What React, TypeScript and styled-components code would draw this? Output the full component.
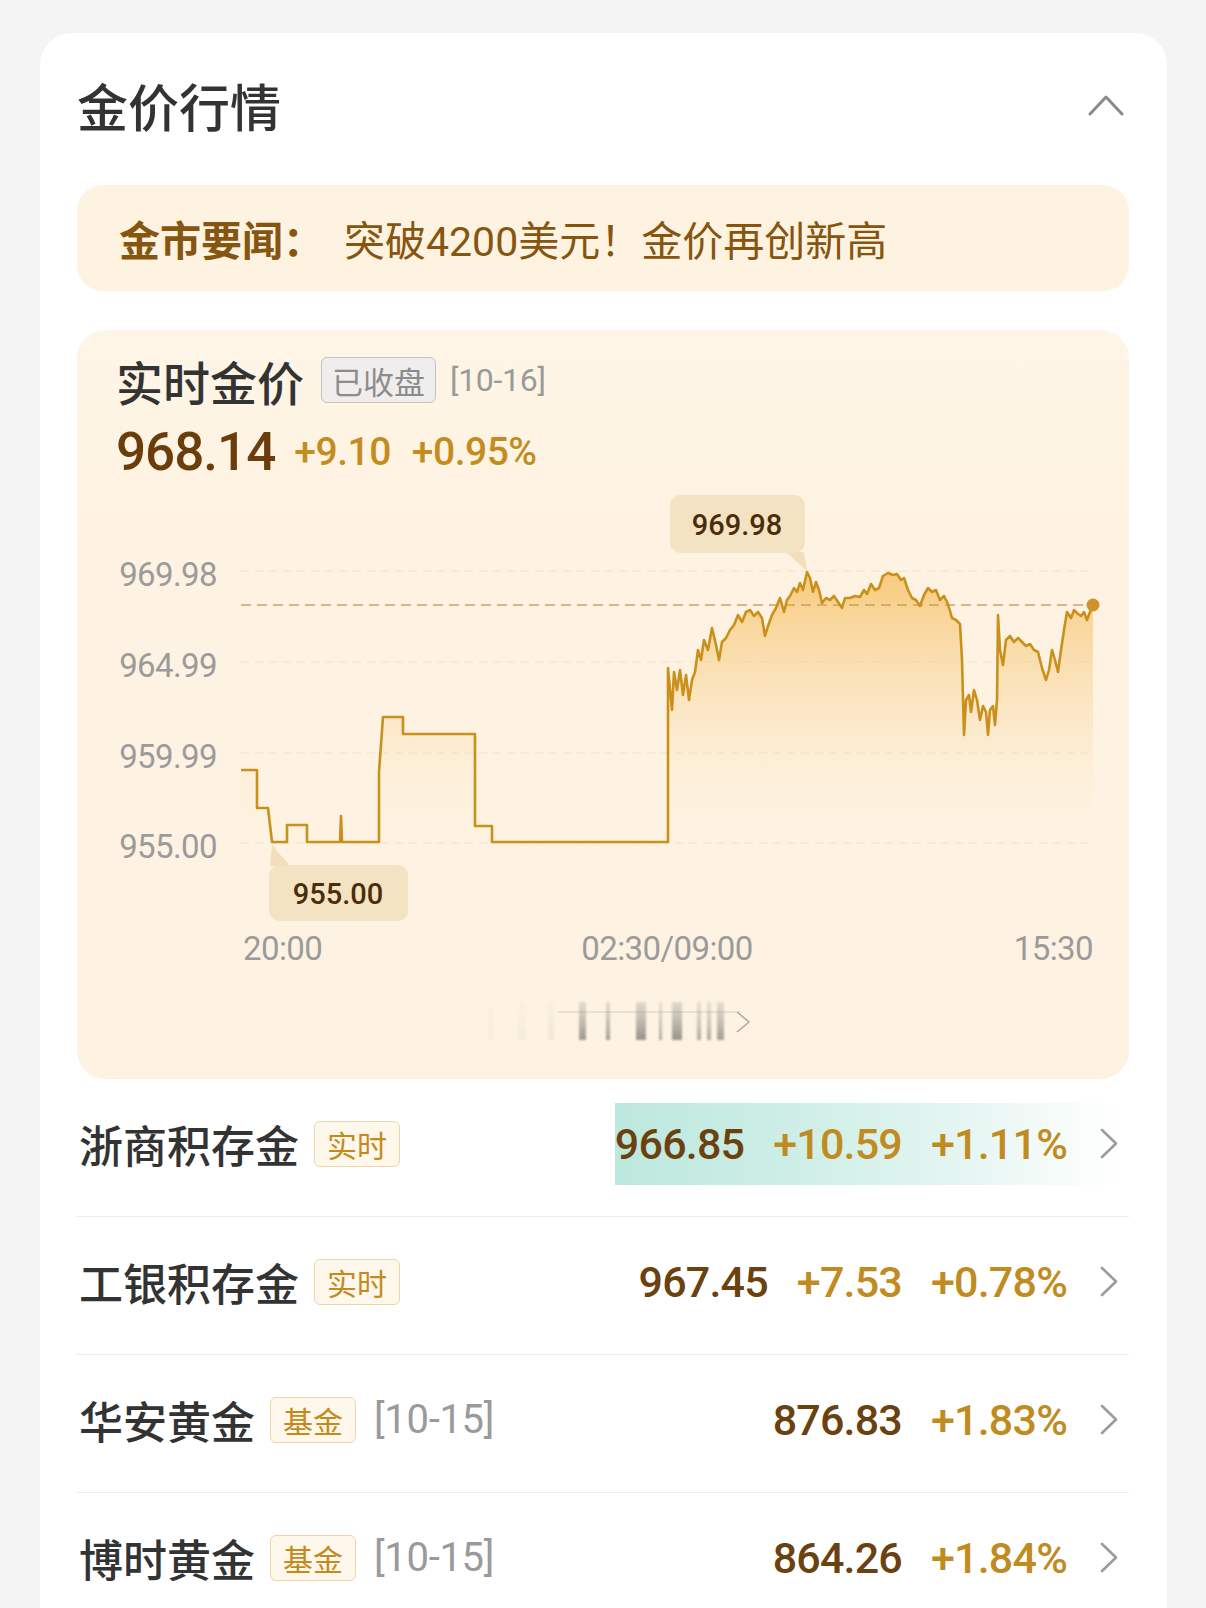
import React from "react";
import styled, { createGlobalStyle, css } from "styled-components";

const GlobalStyle = createGlobalStyle`
  html, body { margin: 0; padding: 0; }
  body {
    background: #f4f4f4;
    font-family: "Noto Sans CJK SC", "Noto Sans", sans-serif;
    -webkit-font-smoothing: antialiased;
  }
`;

const NUM_FONT = `"Roboto", "Noto Sans CJK SC", sans-serif`;

const Page = styled.div`
  min-height: 1608px;
  padding: 33px 39px 0 40px;
  box-sizing: border-box;
  overflow: hidden;
`;

const Card = styled.section`
  background: #ffffff;
  border-radius: 32px;
  padding: 0 38px 40px 37px;
`;

const Header = styled.header`
  height: 152px;
  box-sizing: border-box;
  padding-bottom: 8px;
  display: flex;
  align-items: center;
  justify-content: space-between;
`;

const Title = styled.h1`
  margin: 0;
  font-size: 51px;
  font-weight: 500;
  color: #333333;
  line-height: 1;
`;

const CollapseButton = styled.button`
  border: none;
  background: transparent;
  padding: 0;
  margin-right: 5px;
  display: flex;
  cursor: pointer;
`;

const NewsBanner = styled.div`
  height: 106px;
  border-radius: 26px;
  background: #fef3e0;
  display: flex;
  align-items: center;
  padding-left: 42px;
  font-family: ${NUM_FONT};
  font-size: 41px;
  color: #86550f;
`;

const NewsLabel = styled.span`
  font-family: "Noto Sans CJK SC", sans-serif;
  font-weight: 700;
`;

const NewsText = styled.span`
  margin-left: 20px;
`;

const ChartPanel = styled.div`
  margin-top: 39px;
  border-radius: 28px;
  background: linear-gradient(180deg, #fff5e6 0%, #fef3e2 30%, #fef3e2 100%);
  padding: 20px 0 29px;
`;

const PanelHead = styled.div`
  height: 60px;
  display: flex;
  align-items: center;
  padding-left: 39px;
`;

const PanelTitle = styled.span`
  font-size: 47px;
  font-weight: 500;
  color: #333333;
  line-height: 1;
`;

const StatusBadge = styled.span`
  margin-left: 17px;
  height: 46px;
  box-sizing: border-box;
  padding: 0 10px;
  display: inline-flex;
  align-items: center;
  border: 1px solid #c4c2bf;
  border-radius: 6px;
  background: #efeeec;
  color: #8c8c8c;
  font-size: 31px;
`;

const DateNote = styled.span<{ $size: number; $gap: number }>`
  margin-left: ${(p) => p.$gap}px;
  font-family: ${NUM_FONT};
  font-size: ${(p) => p.$size}px;
  color: #9a9a9a;
  letter-spacing: -0.3px;
`;

const PriceRow = styled.div`
  margin-top: 10px;
  height: 64px;
  display: flex;
  align-items: center;
  padding-left: 39px;
  font-family: ${NUM_FONT};
`;

const BigPrice = styled.span`
  font-size: 53px;
  font-weight: 500;
  color: #6a3d0b;
  letter-spacing: -1px;
`;

const Change = styled.span<{ $gap: number }>`
  margin-left: ${(p) => p.$gap}px;
  font-size: 39px;
  font-weight: 500;
  color: #c48c1d;
  letter-spacing: -0.5px;
`;

const ChartSvg = styled.svg`
  display: block;
  width: 1054px;
  height: 496px;
`;

const ScrollHint = styled.div`
  height: 70px;
  display: flex;
  justify-content: center;
  align-items: flex-start;
  padding-top: 20px;
  box-sizing: border-box;
  padding-right: 6px;
`;

const List = styled.div`
  display: flex;
  flex-direction: column;
`;

const Row = styled.div`
  height: 138px;
  box-sizing: border-box;
  padding-bottom: 8px;
  border-bottom: 1px solid #ececec;
  display: flex;
  align-items: center;
  justify-content: space-between;
`;

const RowLeft = styled.div`
  display: flex;
  align-items: center;
  padding-left: 2px;
`;

const Name = styled.span`
  font-size: 44px;
  font-weight: 500;
  color: #333333;
  line-height: 1;
`;

const Tag = styled.span`
  margin-left: 15px;
  height: 46px;
  box-sizing: border-box;
  padding: 0 12px;
  display: inline-flex;
  align-items: center;
  border: 1px solid #efd6a6;
  border-radius: 6px;
  background: #fdf7ec;
  color: #c48a1a;
  font-size: 30px;
`;

const RowRight = styled.div<{ $highlight?: boolean }>`
  height: 82px;
  margin-right: 11px;
  display: flex;
  align-items: center;
  ${(p) =>
    p.$highlight &&
    css`
      background: linear-gradient(
        90deg,
        #bde8de 0%,
        #cdeee6 35%,
        #e6f6f2 70%,
        #ffffff 100%
      );
    `}
`;

const Values = styled.div`
  display: flex;
  align-items: center;
  gap: 29px;
  font-family: ${NUM_FONT};
  font-size: 43px;
  font-weight: 500;
  letter-spacing: -0.8px;
`;

const Price = styled.span`
  color: #6a410f;
`;

const Delta = styled.span`
  color: #c08b20;
`;

const RowArrow = styled.span`
  margin-left: 33px;
  display: flex;
`;

const linePath =
  "M241,770 H257 V808 H268 L272,842 H287 V825 H307 V842 H340 L341,816 L342,842 H379 V772 L383,717 H403 V734 H475 V826 H492 V842 H668 V668 " +
  "L672,710 L674,672 L677,690 L680,670 L683,695 L686,675 L689,700 L692,680 L695,672 L698,650 L701,660 L704,640 L708,650 L712,628 L716,645 L719,660 L722,642 L726,638 L730,630 L734,625 L738,615 L742,622 L746,612 L750,610 L754,616 L758,612 L762,618 L765,636 L768,626 L772,615 L776,608 L780,598 L784,612 L787,600 L790,596 L794,588 L797,592 L800,583 L803,590 L807,572 L810,578 L813,592 L816,582 L819,590 L822,603 L826,598 L830,600 L834,596 L838,602 L842,608 L845,598 L850,598 L855,596 L860,597 L864,590 L867,594 L871,584 L875,590 L879,588 L883,576 L888,573 L893,575 L897,574 L901,580 L904,578 L908,590 L912,598 L916,600 L920,606 L924,595 L928,588 L932,592 L936,590 L940,600 L944,596 L948,604 L952,618 L956,620 L960,624 L962,660 L964,735 L966,700 L969,695 L971,712 L974,690 L977,700 L980,720 L983,706 L986,712 L988,735 L990,710 L993,706 L995,725 L997,700 L998,615 L1000,650 L1003,665 L1006,640 L1010,636 L1014,642 L1018,638 L1022,642 L1026,646 L1030,644 L1034,650 L1038,652 L1042,668 L1046,680 L1049,670 L1052,650 L1055,660 L1058,672 L1061,650 L1064,630 L1067,612 L1071,618 L1074,610 L1078,614 L1081,616 L1084,612 L1087,620 L1090,612 L1093,605";

const gridYs = [
  { y: 571, label: "969.98" },
  { y: 662, label: "964.99" },
  { y: 753, label: "959.99" },
  { y: 843, label: "955.00" },
];

const axisText = {
  fontFamily: "Roboto, sans-serif",
  fontSize: 33,
  fill: "#9b9b9b",
  letterSpacing: -0.6,
} as const;

const tipText = {
  fontFamily: "Roboto, sans-serif",
  fontSize: 29,
  fontWeight: 500,
  fill: "#4a2d0b",
} as const;

function PriceChart() {
  return (
    <ChartSvg viewBox="77 484 1054 496">
      <defs>
        <linearGradient id="area" x1="0" y1="571" x2="0" y2="860" gradientUnits="userSpaceOnUse">
          <stop offset="0" stopColor="#f6c062" stopOpacity="0.8" />
          <stop offset="0.45" stopColor="#f8d49a" stopOpacity="0.45" />
          <stop offset="1" stopColor="#fef3e2" stopOpacity="0" />
        </linearGradient>
      </defs>
      {gridYs.map((g) => (
        <g key={g.label}>
          <line x1={241} x2={1093} y1={g.y} y2={g.y} stroke="#f1e2c8" strokeWidth={1.2} strokeDasharray="8 6" />
          <text x={217} y={g.y + 3} textAnchor="end" dominantBaseline="central" style={axisText}>
            {g.label}
          </text>
        </g>
      ))}
      <path d={`${linePath} L1093,850 L241,850 Z`} fill="url(#area)" />
      <line x1={241} x2={1093} y1={605} y2={605} stroke="#cfa35c" strokeWidth={1.6} strokeDasharray="10 6" />
      <path d={linePath} fill="none" stroke="#c9901c" strokeWidth={2.6} strokeLinejoin="round" />
      <circle cx={1093} cy={605} r={6.5} fill="#d0922a" />

      <polygon points="786,552 804,552 807,571" fill="#f1dfba" />
      <rect x={670} y={495} width={135} height={58} rx={10} fill="#f4e3c2" />
      <text x={737} y={525} textAnchor="middle" dominantBaseline="central" style={tipText}>
        969.98
      </text>

      <polygon points="270,866 290,866 272,845" fill="#f1dfba" />
      <rect x={269} y={865} width={139} height={56} rx={10} fill="#f4e3c2" />
      <text x={338} y={894} textAnchor="middle" dominantBaseline="central" style={tipText}>
        955.00
      </text>

      <text x={243} y={948} dominantBaseline="central" style={axisText}>
        20:00
      </text>
      <text x={667} y={948} textAnchor="middle" dominantBaseline="central" style={axisText}>
        02:30/09:00
      </text>
      <text x={1093} y={948} textAnchor="end" dominantBaseline="central" style={axisText}>
        15:30
      </text>
    </ChartSvg>
  );
}

const hintBars = [
  { x: 131, w: 7, o: 0.75 },
  { x: 158, w: 4, o: 0.7 },
  { x: 188, w: 10, o: 0.8 },
  { x: 211, w: 3, o: 0.6 },
  { x: 224, w: 10, o: 0.8 },
  { x: 249, w: 4, o: 0.6 },
  { x: 259, w: 4, o: 0.6 },
  { x: 269, w: 7, o: 0.7 },
  { x: 40, w: 6, o: 0.05 },
  { x: 70, w: 8, o: 0.06 },
  { x: 100, w: 6, o: 0.1 },
];

function ScrollHintIcon() {
  return (
    <svg width="304" height="44" viewBox="0 0 304 44">
      <defs>
        <linearGradient id="hintLine" x1="0" x2="1" y1="0" y2="0">
          <stop offset="0" stopColor="#777" stopOpacity="0.8" />
          <stop offset="0.04" stopColor="#b8b4ae" stopOpacity="0.45" />
          <stop offset="1" stopColor="#cfc9c0" stopOpacity="0.35" />
        </linearGradient>
        <linearGradient id="hintBar" x1="0" x2="0" y1="0" y2="1">
          <stop offset="0" stopColor="#9a9794" stopOpacity="0.35" />
          <stop offset="1" stopColor="#7c7a77" stopOpacity="1" />
        </linearGradient>
        <filter id="hintBlur" x="-20%" y="-20%" width="140%" height="140%">
          <feGaussianBlur stdDeviation="1.2" />
        </filter>
      </defs>
      <line x1={1} x2={292} y1={35} y2={35} stroke="url(#hintLine)" strokeWidth={2} />
      <line x1={110} x2={292} y1={12} y2={12} stroke="#d6d0c6" strokeWidth={2} opacity={0.5} />
      <g filter="url(#hintBlur)">
        {hintBars.map((b) => (
          <rect key={b.x} x={b.x} y={2} width={b.w} height={38} fill="url(#hintBar)" opacity={b.o} />
        ))}
      </g>
      <polyline points="289,12 301,22 289,32" fill="none" stroke="#b0aaa2" strokeWidth={1.6} />
    </svg>
  );
}

type Item = {
  name: string;
  tag: string;
  date?: string;
  price: string;
  deltas: string[];
  highlight?: boolean;
};

const items: Item[] = [
  { name: "浙商积存金", tag: "实时", price: "966.85", deltas: ["+10.59", "+1.11%"], highlight: true },
  { name: "工银积存金", tag: "实时", price: "967.45", deltas: ["+7.53", "+0.78%"] },
  { name: "华安黄金", tag: "基金", date: "[10-15]", price: "876.83", deltas: ["+1.83%"] },
  { name: "博时黄金", tag: "基金", date: "[10-15]", price: "864.26", deltas: ["+1.84%"] },
];

function ChevronRight() {
  return (
    <svg width="18" height="31" viewBox="0 0 18 31">
      <polyline points="2,2 16,15.5 2,29" fill="none" stroke="#9c9c9c" strokeWidth={2.6} strokeLinecap="round" strokeLinejoin="round" />
    </svg>
  );
}

export default function App() {
  return (
    <>
      <GlobalStyle />
      <Page>
        <Card>
          <Header>
            <Title>金价行情</Title>
            <CollapseButton aria-label="收起">
              <svg width="36" height="22" viewBox="0 0 36 22">
                <polyline points="2,20 18,3 34,20" fill="none" stroke="#8a8a8a" strokeWidth={3} strokeLinecap="round" strokeLinejoin="round" />
              </svg>
            </CollapseButton>
          </Header>

          <NewsBanner>
            <NewsLabel>金市要闻：</NewsLabel>
            <NewsText>突破4200美元！金价再创新高</NewsText>
          </NewsBanner>

          <ChartPanel>
            <PanelHead>
              <PanelTitle>实时金价</PanelTitle>
              <StatusBadge>已收盘</StatusBadge>
              <DateNote $size={32} $gap={14}>[10-16]</DateNote>
            </PanelHead>
            <PriceRow>
              <BigPrice>968.14</BigPrice>
              <Change $gap={19}>+9.10</Change>
              <Change $gap={21}>+0.95%</Change>
            </PriceRow>
            <PriceChart />
            <ScrollHint>
              <ScrollHintIcon />
            </ScrollHint>
          </ChartPanel>

          <List>
            {items.map((it) => (
              <Row key={it.name}>
                <RowLeft>
                  <Name>{it.name}</Name>
                  <Tag>{it.tag}</Tag>
                  {it.date && (
                    <DateNote $size={40} $gap={18}>
                      {it.date}
                    </DateNote>
                  )}
                </RowLeft>
                <RowRight $highlight={it.highlight}>
                  <Values>
                    <Price>{it.price}</Price>
                    {it.deltas.map((d) => (
                      <Delta key={d}>{d}</Delta>
                    ))}
                  </Values>
                  <RowArrow>
                    <ChevronRight />
                  </RowArrow>
                </RowRight>
              </Row>
            ))}
          </List>
        </Card>
      </Page>
    </>
  );
}
